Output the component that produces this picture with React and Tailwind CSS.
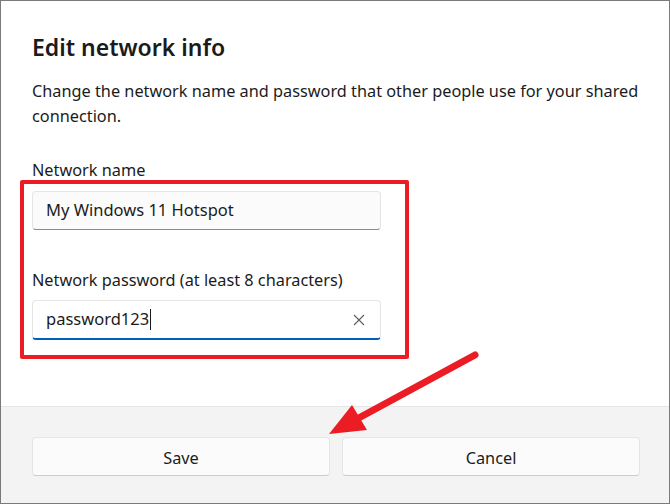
import React from "react";

export default function App() {
  const font = { fontFamily: '"Noto Sans", "Open Sans", sans-serif' };
  return (
    <div
      className="relative w-[670px] h-[504px] overflow-hidden border border-[#7a7a7a] bg-white flex flex-col text-[#1b1b1b]"
      style={font}
    >
      <div className="flex-1 flex flex-col pl-[31px] pr-[29px] pt-[31px]">
        <h1 className="text-[23px] leading-[31px] font-semibold">Edit network info</h1>
        <p className="mt-[16px] text-[16.3px] leading-[25px]">
          Change the network name and password that other people use for your shared connection.
        </p>
        <label className="mt-[30px] text-[16.3px] leading-[22px]">Network name</label>
        <div className="mt-[10px] w-[349px] h-[39px] rounded-[4px] bg-[#fbfbfb] border border-[#e5e5e5] border-b-[#8a8a8a] flex items-center pl-[13px] text-[16.5px]">
          My Windows 11 Hotspot
        </div>
        <label className="mt-[39px] text-[16.3px] leading-[22px]">Network password (at least 8 characters)</label>
        <div className="mt-[9px] w-[349px] h-[40px] rounded-[4px] bg-white border border-[#e5e5e5] border-b-2 border-b-[#005fb8] flex items-center pl-[13px] pr-[15px] text-[16.5px]">
          <span>password123</span>
          <span className="w-px h-[21px] bg-[#1b1b1b] ml-[1px]" />
          <div className="flex-1" />
          <svg width="12" height="12" viewBox="0 0 12 12">
            <path d="M1 1L11 11M11 1L1 11" stroke="#5c5c5c" strokeWidth="1.1" />
          </svg>
        </div>
      </div>
      <div className="h-[97px] bg-[#f3f3f3] border-t border-[#e5e5e5] flex gap-[12px] pl-[31px] pr-[29px] pt-[30px]">
        <button className="flex-1 h-[39px] pt-[3px] rounded-[4px] bg-[#fbfbfb] border border-[#e5e5e5] border-b-[#cccccc] text-[16.3px] text-[#1b1b1b]">
          Save
        </button>
        <button className="flex-1 h-[39px] pt-[3px] rounded-[4px] bg-[#fbfbfb] border border-[#e5e5e5] border-b-[#cccccc] text-[16.3px] text-[#1b1b1b]">
          Cancel
        </button>
      </div>

      {/* annotation: red box */}
      <div className="absolute left-[19px] top-[179px] w-[389px] h-[179px] border-[4px] border-[#ec1c24] rounded-[2px] pointer-events-none" />
      {/* annotation: arrow */}
      <svg className="absolute left-[-1px] top-[-1px] pointer-events-none" width="670" height="504">
        <line x1="475" y1="355" x2="355" y2="420" stroke="#ec1c24" strokeWidth="7" strokeLinecap="round" />
        <polygon points="329,434 352,405 367,430" fill="#ec1c24" />
      </svg>
    </div>
  );
}
